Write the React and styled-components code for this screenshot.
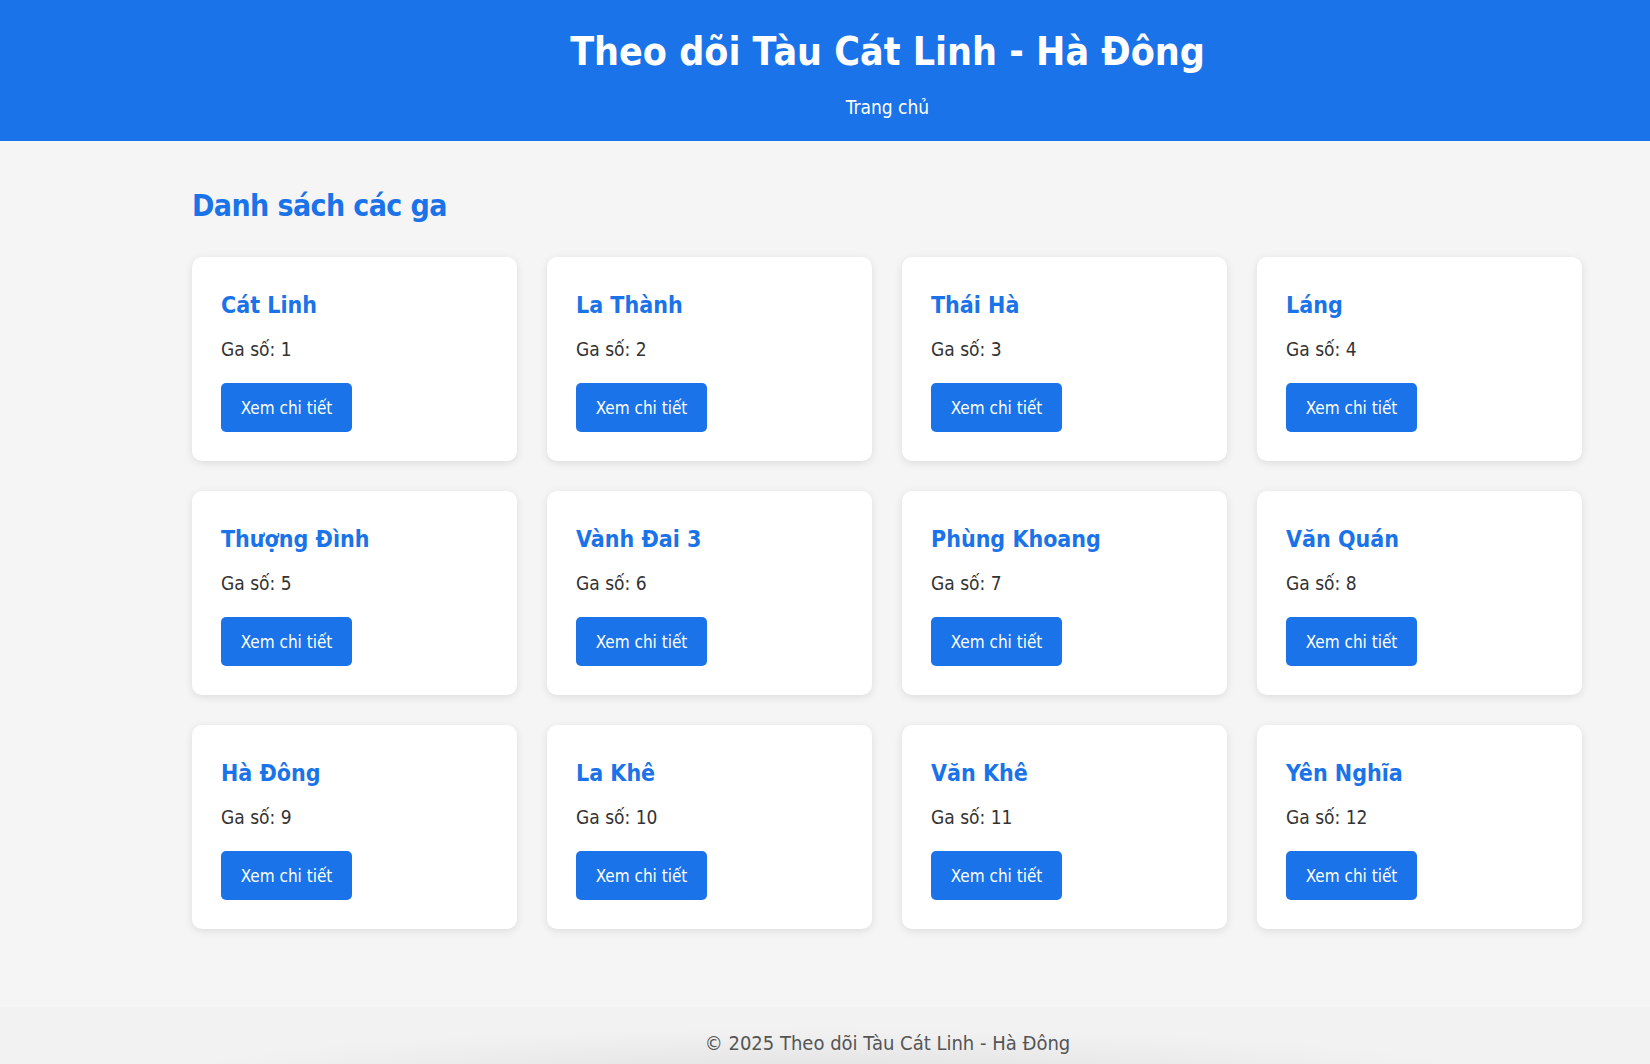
import React from "react";
import styled, { createGlobalStyle } from "styled-components";

const GlobalStyle = createGlobalStyle`
  html, body {
    margin: 0;
    padding: 0;
    background: #f5f5f5;
  }
  * { box-sizing: border-box; }
`;

const FONT = `"DejaVu Sans Condensed", "DejaVu Sans", sans-serif`;
/* the page's centre axis sits right of the window centre */
const AXIS_SHIFT = 125;

const Page = styled.div`
  min-height: 1064px;
  display: flex;
  flex-direction: column;
  font-family: ${FONT};
  color: #333;
  background: #f5f5f5;
`;

const Header = styled.header`
  background: #1a73e8;
  color: #fff;
  text-align: center;
  padding: 28px 0 22px ${AXIS_SHIFT}px;
`;

const Title = styled.h1`
  margin: 0;
  font-size: 39px;
  line-height: 48px;
  font-weight: bold;
`;

const Nav = styled.nav`
  margin-top: 19px;
  font-size: 19px;
  line-height: 24px;
`;

const NavLink = styled.a`
  color: #fff;
  text-decoration: none;
`;

const Main = styled.main`
  flex: 1;
  width: 1390px;
  margin-left: 192px;
  padding: 46px 0 78px;
`;

const SectionTitle = styled.h2`
  margin: 0 0 32px;
  font-size: 30px;
  line-height: 38px;
  letter-spacing: -0.6px;
  font-weight: bold;
  color: #1a73e8;
`;

const Grid = styled.div`
  display: grid;
  grid-template-columns: repeat(4, 1fr);
  gap: 30px;
`;

const Card = styled.div`
  background: #fff;
  border-radius: 10px;
  box-shadow: 0 2px 8px rgba(0, 0, 0, 0.1);
  padding: 29px;
  display: flex;
  flex-direction: column;
  align-items: flex-start;
`;

const StationName = styled.h3`
  margin: 5px 0 0;
  font-size: 23px;
  line-height: 28px;
  font-weight: bold;
  color: #1a73e8;
`;

const StationNo = styled.p`
  margin: 19px 0 0;
  font-size: 19px;
  line-height: 22px;
  color: #333;
`;

const DetailButton = styled.button`
  margin-top: 23px;
  width: 131px;
  height: 49px;
  padding: 0;
  border: none;
  border-radius: 5px;
  background: #1a73e8;
  color: #fff;
  font-family: ${FONT};
  font-size: 17px;
  cursor: pointer;
`;

const Footer = styled.footer`
  background:
    radial-gradient(ellipse 40% 70% at 50% 100%, rgba(0, 0, 0, 0.07), rgba(0, 0, 0, 0) 100%),
    #f2f2f2;
  text-align: center;
  padding: 24px 0 22px ${AXIS_SHIFT}px;
  font-size: 20px;
  line-height: 24px;
  color: #555;
`;

const stations = [
  "Cát Linh",
  "La Thành",
  "Thái Hà",
  "Láng",
  "Thượng Đình",
  "Vành Đai 3",
  "Phùng Khoang",
  "Văn Quán",
  "Hà Đông",
  "La Khê",
  "Văn Khê",
  "Yên Nghĩa",
];

export default function App() {
  return (
    <Page>
      <GlobalStyle />
      <Header>
        <Title>Theo dõi Tàu Cát Linh - Hà Đông</Title>
        <Nav>
          <NavLink href="#">Trang chủ</NavLink>
        </Nav>
      </Header>
      <Main>
        <SectionTitle>Danh sách các ga</SectionTitle>
        <Grid>
          {stations.map((name, i) => (
            <Card key={name}>
              <StationName>{name}</StationName>
              <StationNo>Ga số: {i + 1}</StationNo>
              <DetailButton>Xem chi tiết</DetailButton>
            </Card>
          ))}
        </Grid>
      </Main>
      <Footer>© 2025 Theo dõi Tàu Cát Linh - Hà Đông</Footer>
    </Page>
  );
}
